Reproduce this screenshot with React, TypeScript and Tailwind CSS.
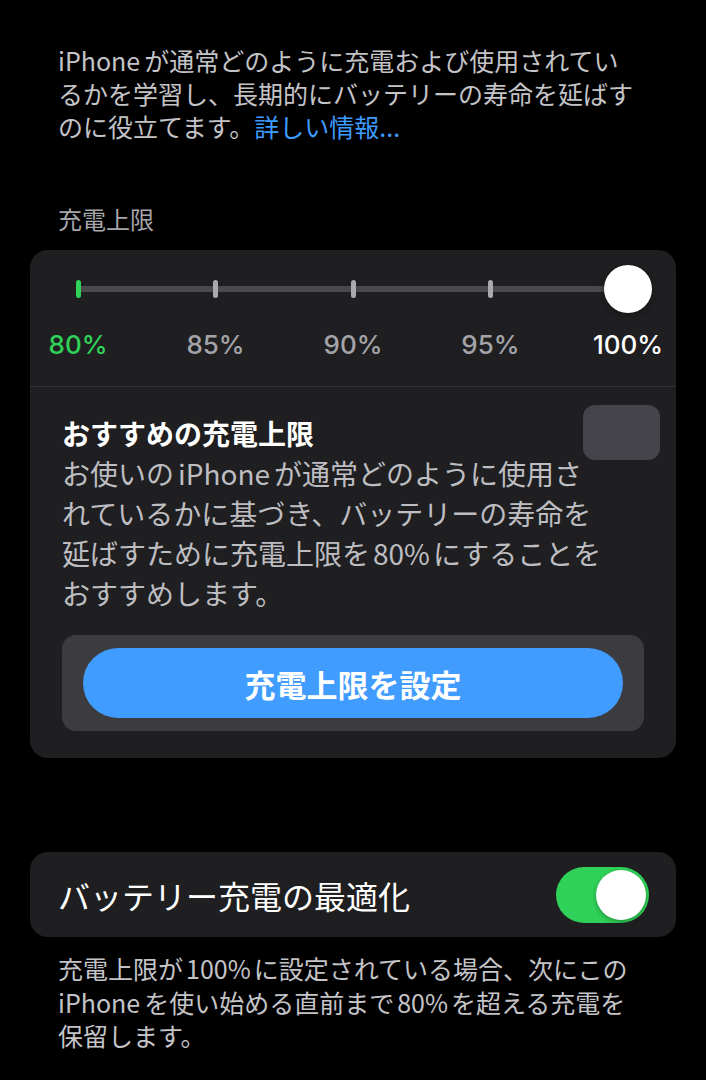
import React from "react";

const jp = { fontFamily: '"Noto Sans CJK JP", "Noto Sans", sans-serif' };
const num = { fontFamily: 'Inter, "Liberation Sans", sans-serif' };

const marks = ["80%", "85%", "90%", "95%", "100%"];

function LimitSlider() {
  return (
    <div className="pt-[15px]">
      <div className="relative mx-[48px] h-[48px]">
        <div className="absolute left-0 right-0 top-[21px] h-[6px] rounded-full bg-[#4a4a4e]" />
        <div className="absolute inset-0 flex justify-between items-center">
          {marks.map((m, i) => (
            <div key={m} className="w-0 flex justify-center">
              {i === 0 ? (
                <div className="w-[5px] h-[18px] shrink-0 rounded-full bg-[#30d158]" />
              ) : i < 4 ? (
                <div className="w-[5px] h-[18px] shrink-0 rounded-full bg-[#a9a9ae]" />
              ) : (
                <div className="w-[48px] h-[48px] shrink-0 rounded-full bg-white shadow-[0_2px_6px_rgba(0,0,0,0.35)]" />
              )}
            </div>
          ))}
        </div>
      </div>
      <div className="mx-[48px] mt-[15px] flex justify-between" style={num}>
        {marks.map((m, i) => (
          <div key={m} className="w-0 flex justify-center">
            <span
              className={
                "whitespace-nowrap text-[26px] leading-[34px] font-medium " +
                (i === 0 ? "text-[#30d158]" : i === 4 ? "text-white" : "text-[#a3a3a8]")
              }
            >
              {m}
            </span>
          </div>
        ))}
      </div>
    </div>
  );
}

export default function App() {
  return (
    <div className="w-[706px] min-h-[1080px] bg-black flow-root" style={jp}>
      <p className="pt-[44px] pl-[58px] text-[25px] leading-[33px] text-[#c4c4c8] whitespace-nowrap">
        <span className="mr-[4px]">iPhone</span>が通常どのように充電および使用されてい
        <br />
        るかを学習し、長期的にバッテリーの寿命を延ばす
        <br />
        のに役立てます。<span className="text-[#3f9cff]">詳しい情報...</span>
      </p>

      <div className="mt-[61px] pl-[58px] text-[24px] leading-[30px] text-[#a6a6ab]">充電上限</div>

      <div className="mx-[30px] mt-[16px] rounded-[18px] bg-[#1f1f21]">
        <div className="pb-[24px] border-b border-[#333336]">
          <LimitSlider />
        </div>

        <div className="relative px-[32px] pt-[26px] pb-[27px]">
          <div className="absolute right-[16px] top-[18px] w-[77px] h-[55px] rounded-[12px] bg-[#45444a]" />
          <div className="text-[28px] leading-[40px] font-bold text-white">おすすめの充電上限</div>
          <p className="text-[28px] leading-[40px] text-[#bdbdc2] whitespace-nowrap">
            お使いの<span className="mx-[4px]">iPhone</span>が通常どのように使用さ
            <br />
            れているかに基づき、バッテリーの寿命を
            <br />
            延ばすために充電上限を<span className="mx-[3px]">80%</span>にすることを
            <br />
            おすすめします。
          </p>
          <div className="mt-[22px] rounded-[14px] bg-[#3c3c40] px-[21px] py-[13px]">
            <button className="w-full h-[70px] rounded-full bg-[#409cff] text-white text-[31px] font-bold leading-none">
              充電上限を設定
            </button>
          </div>
        </div>
      </div>

      <div className="mx-[30px] mt-[94px] h-[85px] rounded-[18px] bg-[#1f1f21] flex items-center justify-between pl-[28px] pr-[27px]">
        <span className="text-[32px] leading-[40px] text-white">バッテリー充電の最適化</span>
        <div className="w-[93px] h-[56px] rounded-full bg-[#30d158] flex items-center justify-end p-[3px]">
          <div className="w-[50px] h-[50px] rounded-full bg-white shadow-[0_2px_5px_rgba(0,0,0,0.3)]" />
        </div>
      </div>

      <p className="mt-[15px] pl-[58px] text-[25px] leading-[33.5px] text-[#c4c4c8] whitespace-nowrap">
        充電上限が<span className="mx-[3px]">100%</span>に設定されている場合、次にこの
        <br />
        <span className="mr-[4px]">iPhone</span>を使い始める直前まで<span className="mx-[3px]">80%</span>を超える充電を
        <br />
        保留します。
      </p>
    </div>
  );
}
